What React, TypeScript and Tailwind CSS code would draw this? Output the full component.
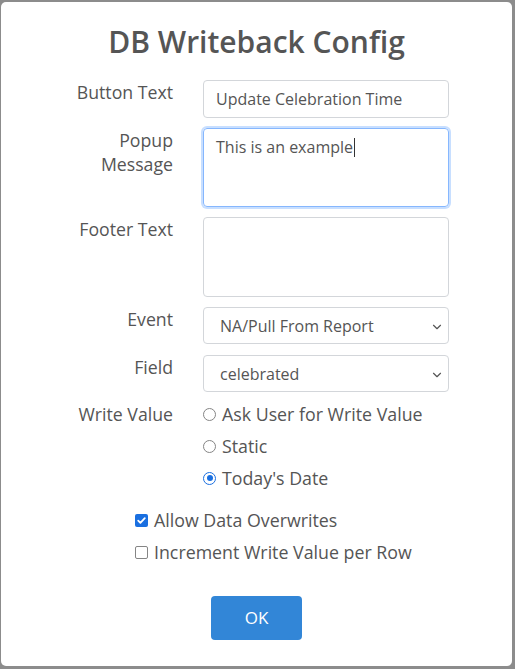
import { ChevronDown } from "lucide-react"

const font = { fontFamily: '"Open Sans", "Noto Sans", sans-serif' }

function Row({ label, children, className = "" }: { label: React.ReactNode; children: React.ReactNode; className?: string }) {
  return (
    <div className={`flex items-start ${className}`}>
      <div className="w-[172px] text-right text-[17.7px] leading-[24px] text-[#555]">{label}</div>
      <div className="ml-[30px] w-[246px]">{children}</div>
    </div>
  )
}

function SelectBox({ value }: { value: string }) {
  return (
    <div className="flex h-[37px] items-center justify-between rounded-[4px] border border-[#d3d6da] bg-white pl-[16px] pr-[4px] text-[16px] text-[#555]">
      <span>{value}</span>
      <ChevronDown size={14} strokeWidth={2} className="mt-[2px] text-[#555]" />
    </div>
  )
}

function RadioMark({ checked }: { checked: boolean }) {
  return checked ? (
    <span className="flex h-[13px] w-[13px] items-center justify-center rounded-full border-[1.5px] border-[#1a6fe0] bg-white">
      <span className="h-[6px] w-[6px] rounded-full bg-[#1a6fe0]" />
    </span>
  ) : (
    <span className="h-[13px] w-[13px] rounded-full border-[1.5px] border-[#858585] bg-white" />
  )
}

function Radio({ label, checked = false }: { label: string; checked?: boolean }) {
  return (
    <div className="flex h-[32px] items-center gap-[6px] text-[17.8px] text-[#555]">
      <RadioMark checked={checked} />
      <span>{label}</span>
    </div>
  )
}

function Check({ label, checked = false }: { label: string; checked?: boolean }) {
  return (
    <div className="flex h-[32px] items-center gap-[6px] text-[17.8px] text-[#555]">
      {checked ? (
        <span className="flex h-[13px] w-[13px] items-center justify-center rounded-[2px] bg-[#1a6fe0]">
          <svg width="11" height="11" viewBox="0 0 11 11" fill="none">
            <path d="M2.2 5.6 4.4 7.8 8.8 3.2" stroke="white" strokeWidth="1.8" strokeLinecap="round" strokeLinejoin="round" />
          </svg>
        </span>
      ) : (
        <span className="h-[13px] w-[13px] rounded-[2px] border-[1.5px] border-[#858585] bg-white" />
      )}
      <span>{label}</span>
    </div>
  )
}

export default function App() {
  return (
    <div className="h-[669px] w-[515px] overflow-hidden bg-[#8c8c8c] pl-[1px] pt-[2px]" style={font}>
      <div className="h-[664px] w-[511px] rounded-[5px] bg-white">
        <h1 className="pt-[22px] text-center text-[30px] font-semibold leading-[36px] text-[#555]">DB Writeback Config</h1>

        <div className="mt-[20px]">
          <Row label="Button Text">
            <div className="flex h-[38px] items-center rounded-[4px] border border-[#d3d6da] px-[12px] text-[16px] text-[#555]">
              Update Celebration Time
            </div>
          </Row>

          <Row label={<>Popup<br />Message</>} className="mt-[10px]">
            <div className="h-[79px] rounded-[4px] border border-[#86b7fe] px-[12px] pt-[6px] text-[16px] leading-[24px] text-[#555] shadow-[0_0_0_2px_rgba(134,183,254,0.45)]">
              This is an example<span className="ml-[1px] inline-block h-[19px] w-[1px] bg-[#333] align-[-4px]" />
            </div>
          </Row>

          <Row label="Footer Text" className="mt-[10px]">
            <div className="h-[80px] rounded-[4px] border border-[#d3d6da]" />
          </Row>

          <Row label="Event" className="mt-[10px]">
            <SelectBox value="NA/Pull From Report" />
          </Row>

          <Row label="Field" className="mt-[11px]">
            <SelectBox value="celebrated" />
          </Row>

          <Row label="Write Value" className="mt-[10px]">
            <div className="-mt-[4px]">
              <Radio label="Ask User for Write Value" />
              <Radio label="Static" />
              <Radio label="Today's Date" checked />
            </div>
          </Row>

          <div className="ml-[134px] mt-[10px]">
            <Check label="Allow Data Overwrites" checked />
            <Check label="Increment Write Value per Row" />
          </div>

          <div className="mt-[28px] flex justify-center">
            <button className="h-[44px] w-[91px] rounded-[4px] bg-[#3286d7] text-[17px] text-white">OK</button>
          </div>
        </div>
      </div>
    </div>
  )
}
